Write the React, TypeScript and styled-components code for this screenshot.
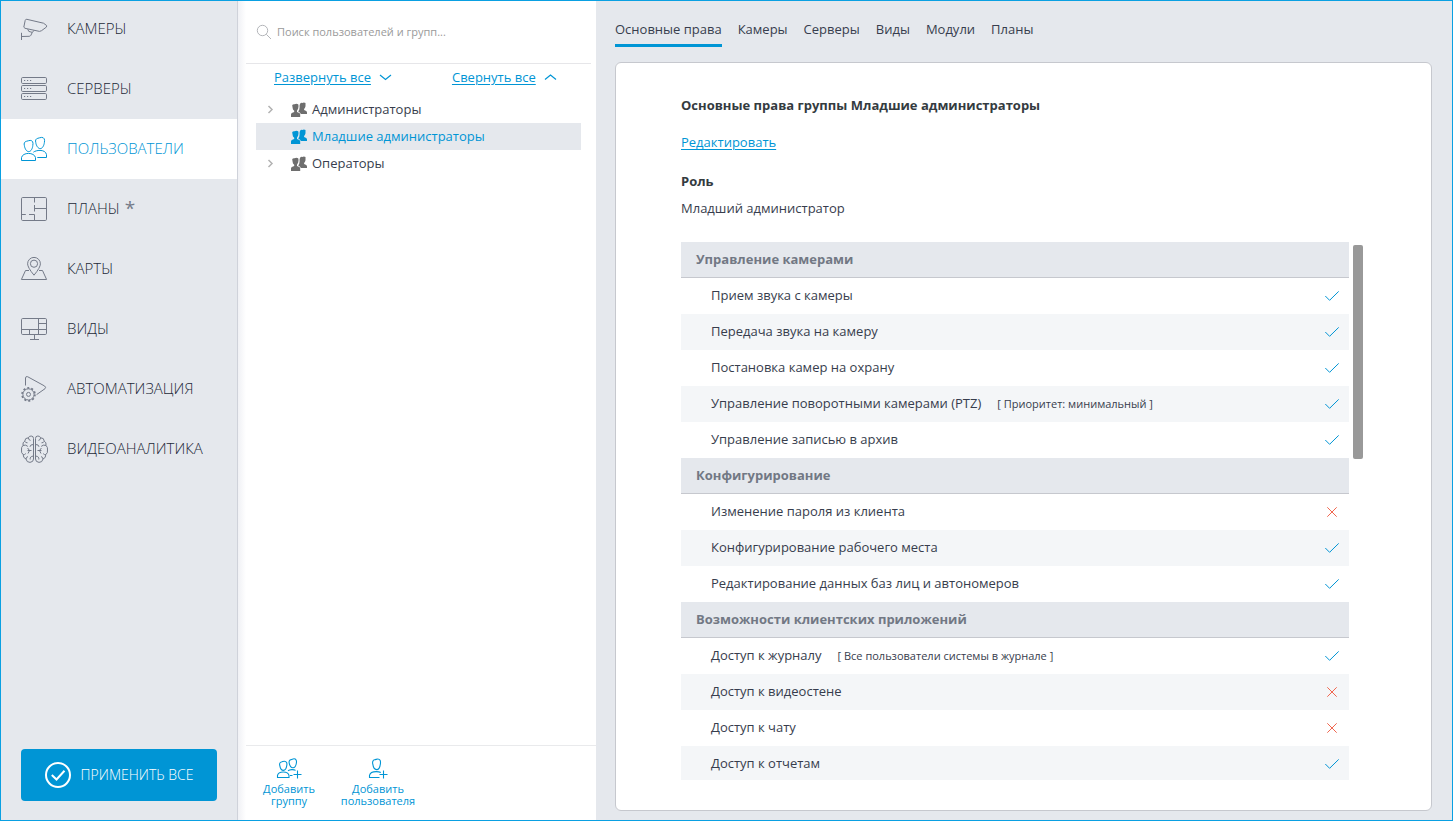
import React from 'react';
import styled, { createGlobalStyle } from 'styled-components';

const c = {
  accent: '#0095d5',
  frame: '#0aa0e2',
  bg: '#e5e8ed',
  line: '#c6c8ce',
  text: '#373d4d',
  heading: '#343b3f',
  muted: '#727884',
  icon: '#747a88',
  danger: '#f0674f',
};

const GlobalStyle = createGlobalStyle`
  *, *::before, *::after { box-sizing: border-box; }
  body {
    margin: 0;
    background: ${c.bg};
    color: ${c.text};
    font-family: "Open Sans", "Noto Sans", sans-serif;
    font-size: 13px;
    line-height: 18px;
  }
  button { font: inherit; border: 0; background: none; padding: 0; cursor: pointer; }
  svg { display: block; flex: none; }
`;

const Shell = styled.div`
  display: flex;
  height: 100vh;
  min-height: 600px;
  border: 1px solid ${c.frame};
  overflow: hidden;
`;

const Sidebar = styled.aside`
  display: flex;
  flex-direction: column;
  justify-content: space-between;
  flex: 0 0 237px;
  border-right: 1px solid #cfd2da;
`;

const Nav = styled.nav`
  display: flex;
  flex-direction: column;
  margin-top: -2px;
`;

const NavItem = styled.a<{ $active?: boolean }>`
  display: flex;
  align-items: center;
  gap: 19px;
  height: 60px;
  padding-left: 19px;
  font-size: 15px;
  font-weight: 300;
  line-height: 20px;
  text-decoration: none;
  color: ${(p) => (p.$active ? c.accent : '#232838')};
  background: ${(p) => (p.$active ? '#fff' : 'transparent')};
  svg { color: ${(p) => (p.$active ? c.accent : c.icon)}; }
`;

const NavLabel = styled.span`
  display: flex;
  gap: 5px;
  padding-bottom: 2px;
`;

const Star = styled.span`
  font-size: 19px;
  font-weight: 400;
  color: ${c.icon};
`;

const ApplyButton = styled.button`
  display: flex;
  align-items: center;
  justify-content: center;
  gap: 10px;
  height: 52px;
  margin: 0 20px 19px;
  border-radius: 4px;
  background: ${c.accent};
  color: #fff;
  font-size: 14px;
  font-weight: 300;
`;

const Panel = styled.section`
  display: flex;
  flex-direction: column;
  flex: 0 0 358px;
  padding-left: 8px;
  background: linear-gradient(to right, #f0f1f5, #fff 8px);
`;

const SearchBar = styled.label`
  display: flex;
  align-items: center;
  gap: 5px;
  height: 63px;
  margin-right: 5px;
  padding-left: 10px;
  border-bottom: 1px solid #e6e6e9;
`;

const SearchInput = styled.input`
  flex: 1;
  min-width: 0;
  border: 0;
  outline: 0;
  padding: 0;
  background: none;
  font: inherit;
  font-size: 11px;
  color: ${c.text};
  &::placeholder { color: #9a9a9a; opacity: 1; }
`;

const TreeActions = styled.div`
  display: flex;
  gap: 60px;
  padding: 4px 0 0 28px;
  height: 32px;
`;

const TreeAction = styled.button`
  display: flex;
  align-items: center;
  gap: 8px;
  height: 18px;
  color: ${c.accent};
  span { text-decoration: underline; text-underline-offset: 2px; }
`;

const Tree = styled.ul`
  list-style: none;
  flex: 1;
  margin: 0;
  padding: 0 15px 0 10px;
`;

const TreeRow = styled.li<{ $active?: boolean }>`
  display: grid;
  grid-template-columns: 23px 16px 1fr;
  align-items: center;
  column-gap: 5px;
  height: 27px;
  padding-left: 7px;
  color: ${(p) => (p.$active ? c.accent : c.text)};
  background: ${(p) => (p.$active ? c.bg : 'transparent')};
`;

const TreeName = styled.span`
  padding-bottom: 2px;
`;

const PanelFooter = styled.div`
  display: flex;
  align-items: flex-start;
  gap: 9px;
  height: 75px;
  padding: 12px 0 0 3px;
  border-top: 1px solid #e9eaec;
`;

const AddButton = styled.button`
  display: flex;
  flex-direction: column;
  align-items: center;
  gap: 3px;
  width: 80px;
  color: ${c.accent};
  font-size: 11px;
  line-height: 12px;
`;

const Main = styled.main`
  display: flex;
  flex-direction: column;
  flex: 1;
  min-width: 0;
  padding: 0 20px 9px 19px;
`;

const Tabs = styled.nav`
  display: flex;
  gap: 16px;
  height: 61px;
  padding-top: 19px;
`;

const Tab = styled.a<{ $active?: boolean }>`
  height: 27px;
  color: ${c.text};
  text-decoration: none;
  border-bottom: 3px solid ${(p) => (p.$active ? c.accent : 'transparent')};
`;

const Card = styled.section`
  display: flex;
  flex-direction: column;
  flex: 1;
  min-height: 0;
  padding: 33px 68px 30px 65px;
  border: 1px solid ${c.line};
  border-radius: 6px;
  background: #fff;
`;

const Title = styled.h1`
  margin: 0 0 19px;
  font-size: 13px;
  font-weight: 700;
  color: ${c.heading};
`;

const EditLink = styled.a`
  align-self: flex-start;
  margin-bottom: 21px;
  color: ${c.accent};
  text-underline-offset: 2px;
`;

const RoleTitle = styled.h2`
  margin: 0 0 9px;
  font-size: 13px;
  font-weight: 700;
  color: ${c.heading};
`;

const Role = styled.p`
  margin: 0 0 25px;
`;

const ScrollArea = styled.div`
  display: flex;
  gap: 4px;
  flex: 1;
  min-height: 0;
`;

const Viewport = styled.div`
  flex: 1;
  overflow-y: auto;
  scrollbar-width: none;
`;

const Rail = styled.div`
  flex: 0 0 10px;
  padding-top: 3px;
`;

const Thumb = styled.div`
  height: 40%;
  border-radius: 2px;
  background: #999;
`;

const Table = styled.table`
  width: 100%;
  border-collapse: separate;
  border-spacing: 0;
`;

const GroupHead = styled.th`
  height: 36px;
  padding: 0 15px 2px;
  text-align: left;
  font-weight: 700;
  color: ${c.muted};
  background: ${c.bg};
  border-bottom: 1px solid ${c.line};
`;

const RightRow = styled.tr`
  &:nth-child(odd) { background: #f4f6f8; }
`;

const RightName = styled.td`
  height: 36px;
  padding: 0 0 2px 30px;
`;

const Note = styled.span`
  margin-left: 16px;
  font-size: 11px;
`;

const Mark = styled.td`
  width: 34px;
  padding: 0 10px;
  svg { margin: 0 auto; }
`;

const Line = ({ children }: { children: React.ReactNode }) => (
  <svg width="28" height="28" viewBox="0 0 28 28" fill="none" stroke="currentColor" strokeWidth="1" strokeLinejoin="round" aria-hidden="true">
    {children}
  </svg>
);

const CameraIcon = () => (
  <Line>
    <path d="M6.8 4.3 23.5 8.2 26.6 10.5 26.5 12 21.5 15.7 19.5 16.4 5 13.3 3.8 12.2 5.2 5.4Q5.6 4.1 6.8 4.3Z" />
    <path d="M7.7 14.2 8.8 16.4 12.3 17.4 14 15.4M12.3 17.4 10.8 20.4Q10.4 21.2 9.2 21.3L1.5 21.5M1.5 17.8V25" />
  </Line>
);

const ServersIcon = () => (
  <Line>
    {[2.5, 10.5, 18.5].map((y) => (
      <g key={y}>
        <rect x="1.5" y={y} width="25" height="6" rx="1.2" />
        <path d={`M4 ${y + 3}h1.2M7 ${y + 3}h1.2M10 ${y + 3}h1.2`} />
      </g>
    ))}
  </Line>
);

const UsersIcon = () => (
  <Line>
    <path d="M4.4 10.6C3.6 8.4 4.6 6.6 6.4 6.3 8 6.1 8.6 5.4 10.2 5.4 12.6 5.4 13.4 7.4 12.8 10.4 12.6 13.4 11 16.6 8.7 16.6 6.4 16.6 4.8 13.6 4.4 10.6Z" />
    <path d="M1.5 25.5V22.6C2 19.8 5.4 18.4 8.5 18.4S15 19.8 15.5 22.6V25.5Z" />
    <path d="M15.8 7.6C15 5.4 16 3.6 17.8 3.3 19.4 3.1 20 2.4 21.6 2.4 24.2 2.4 25 4.4 24.4 7.4 24 10.4 22.6 13.6 20.2 13.6 18 13.6 16.2 10.6 15.8 7.6Z" />
    <path d="M13.4 17.2C15 16 17.4 15.4 20 15.4 23.2 15.4 26 16.8 26.5 19.6V22.5H17.3" />
  </Line>
);

const PlansIcon = () => (
  <Line>
    <rect x="1.5" y="2.5" width="25" height="23" rx="1.2" />
    <path d="M14.5 2.5V7.5M14.5 10V16.5M14.5 13.5H26.5M1.5 19.5H5.8M9 19.5H14.5V25.5" />
  </Line>
);

const MapIcon = () => (
  <Line>
    <path d="M14 20.2Q7.6 12.4 7.6 8.8A6.4 6.4 0 0 1 20.4 8.8Q20.4 12.4 14 20.2Z" />
    <circle cx="14" cy="8.7" r="3.6" />
    <path d="M9 15.5H5.5L1.4 24.5H26.6L22.5 15.5H19" />
  </Line>
);

const ViewsIcon = () => (
  <Line>
    <rect x="1.5" y="3.5" width="25" height="16" rx="1.2" />
    <path d="M18.5 3.5V19.5M1.5 14.5H26.5M9.5 14.5V19.5M18.5 8.5H26.5M14.5 19.5V24.5M10 24.5H19" />
  </Line>
);

const AutomationIcon = () => (
  <Line>
    <path d="M5.5 10.5V3Q5.7 1 7.6 1.7L24.6 11Q26.4 12.4 25 13.7L16.6 19.6" />
    <circle cx="8.5" cy="19.4" r="5.6" />
    <circle cx="8.5" cy="19.4" r="6.5" strokeWidth="1.6" strokeDasharray="2.04 2.04" />
    <circle cx="8.5" cy="19.4" r="2" />
  </Line>
);

const BrainHalf = () => (
  <>
    <path d="M13.5 3.5Q13.5 1 11.2 1 9 1 8.4 2.8 5 2.6 4.7 6.2 2.4 7.4 3 10.4 1 12.4 1.5 15 1 18 3.2 19.6 3 23 6 24 6.6 27.5 10 27.4 13.5 27 13.5 24Z" />
    <path d="M4.7 6.2Q5.5 8 7.5 7.8M8.4 2.8Q8.4 5 10.5 5.4M3 10.4Q6 9.4 7.8 11.4M7.5 15.5H11.5M9.5 15.5 7.6 13M9.5 15.5 8 18.5M3.2 19.6Q4.5 20 5.8 18.6M13.2 9.5Q10.2 9.5 10 11.8M6 24Q6 22 8 21.6M10.2 24.5Q9.6 21.5 13.4 21" />
  </>
);

const BrainIcon = () => (
  <Line>
    <BrainHalf />
    <g transform="translate(29 0) scale(-1 1)"><BrainHalf /></g>
  </Line>
);

const ApplyIcon = () => (
  <svg width="26" height="26" viewBox="0 0 26 26" fill="none" stroke="#fff" strokeWidth="2" aria-hidden="true">
    <circle cx="13" cy="13" r="12" />
    <path d="M6.8 13 11.5 17.5 19.5 8.8" />
  </svg>
);

const SearchIcon = () => (
  <svg width="16" height="16" viewBox="0 0 16 16" fill="none" stroke="#b4b6ba" aria-hidden="true">
    <circle cx="6.5" cy="6.5" r="5.2" />
    <path d="M10.3 10.3 15 15" />
  </svg>
);

const Chevron = ({ up }: { up?: boolean }) => (
  <svg width="13" height="8" viewBox="0 0 13 8" fill="none" stroke="currentColor" strokeWidth="1.2" aria-hidden="true">
    <path d={up ? 'M1 6.5 6.5 2 12 6.5' : 'M1 2 6.5 6.5 12 2'} />
  </svg>
);

const Expander = () => (
  <svg width="15" height="9" viewBox="0 0 15 9" fill="none" stroke="#b3b3b3" strokeWidth="1.5" aria-hidden="true">
    <path d="M5.5 1 9 4.5 5.5 8" />
  </svg>
);

const GroupIcon = ({ active }: { active?: boolean }) => (
  <svg width="16" height="15" viewBox="0 0 16 15" fill={active ? c.accent : '#6e6e6e'} aria-hidden="true">
    <path d="M9 2Q9.6.7 11.2.9 13 0 14.5.9V4.2Q14.2 6 13.1 7V8L15.2 9Q16 9.5 16 10.5V12H9.8Q9.5 10.5 7.6 9.8L7.2 9.3Q8.6 8 8.6 5.5V3.2Z" />
    <path d="M1.2 3.2Q1.8 2 3.5 2.2 5.5 1.3 7.2 2.2 8 4 7.2 6.6L6 8.8V10L8.4 11Q9.2 11.5 9.2 12.6V15H0V12.6Q0 11.5.8 11L3.2 10V8.8Q1.6 7.6 1.6 5.8Z" />
  </svg>
);

const AddGroupIcon = () => (
  <svg width="26" height="22" viewBox="0 0 26 22" fill="none" stroke="currentColor" strokeWidth="1.1" aria-hidden="true">
    <path d="M3.8 7.6C3.2 5.6 4 4.2 5.4 4 6.6 3.8 7.2 3.2 8.4 3.2 10.6 3.2 11.2 5 10.8 7.4 10.4 10 9.2 12.4 7.4 12.4S4.2 10 3.8 7.6Z" />
    <path d="M1.5 19.5V17.4C2 15 4.6 14 7.2 14S12.5 15 13 17.4V19.5Z" />
    <path d="M13.2 5.2C12.8 3.2 13.6 1.8 15 1.6 16.2 1.4 16.8.8 18 .8 20 .8 20.8 2.6 20.4 5 20 7.6 18.8 9.8 17 9.8S13.6 7.6 13.2 5.2ZM12 12.8C13.8 11.6 17.4 11 19.6 12.4M14 17.5H16.5M17.5 16.5H25.5M21.5 12.5V20.5" />
  </svg>
);

const AddUserIcon = () => (
  <svg width="20" height="22" viewBox="0 0 20 22" fill="none" stroke="currentColor" strokeWidth="1.1" aria-hidden="true">
    <path d="M4.8 6.2C4.2 3.8 5 2 6.6 1.8 8 1.6 8.6 1 9.8 1 12 1 12.8 3 12.4 5.8 12 9 10.6 11.6 8.6 11.6S5.2 9 4.8 6.2Z" />
    <path d="M11.5 19.5H1.5V17.4C2 14.8 5 13.6 8.2 13.6 10 13.6 11.6 13.9 12.8 14.6M11.5 16.5H19.5M15.5 12.5V20.5" />
  </svg>
);

const Allowed = () => (
  <svg width="14" height="10" viewBox="0 0 14 10" fill="none" stroke={c.accent} role="img" aria-label="Да">
    <path d="M.3 5 4.6 9.3 13.7.4" />
  </svg>
);

const Denied = () => (
  <svg width="10" height="10" viewBox="0 0 10 10" fill="none" stroke={c.danger} role="img" aria-label="Нет">
    <path d="M.3.3 9.7 9.7M9.7.3.3 9.7" />
  </svg>
);

const navItems = [
  { label: 'КАМЕРЫ', Icon: CameraIcon },
  { label: 'СЕРВЕРЫ', Icon: ServersIcon },
  { label: 'ПОЛЬЗОВАТЕЛИ', Icon: UsersIcon, active: true },
  { label: 'ПЛАНЫ', Icon: PlansIcon, changed: true },
  { label: 'КАРТЫ', Icon: MapIcon },
  { label: 'ВИДЫ', Icon: ViewsIcon },
  { label: 'АВТОМАТИЗАЦИЯ', Icon: AutomationIcon },
  { label: 'ВИДЕОАНАЛИТИКА', Icon: BrainIcon },
];

const userGroups = [
  { name: 'Администраторы', expandable: true },
  { name: 'Младшие администраторы', active: true },
  { name: 'Операторы', expandable: true },
];

const tabs = ['Основные права', 'Камеры', 'Серверы', 'Виды', 'Модули', 'Планы'];

type Right = { name: string; note?: string; ok: boolean };
const rights: { title: string; items: Right[] }[] = [
  {
    title: 'Управление камерами',
    items: [
      { name: 'Прием звука с камеры', ok: true },
      { name: 'Передача звука на камеру', ok: true },
      { name: 'Постановка камер на охрану', ok: true },
      { name: 'Управление поворотными камерами (PTZ)', note: '[ Приоритет: минимальный ]', ok: true },
      { name: 'Управление записью в архив', ok: true },
    ],
  },
  {
    title: 'Конфигурирование',
    items: [
      { name: 'Изменение пароля из клиента', ok: false },
      { name: 'Конфигурирование рабочего места', ok: true },
      { name: 'Редактирование данных баз лиц и автономеров', ok: true },
    ],
  },
  {
    title: 'Возможности клиентских приложений',
    items: [
      { name: 'Доступ к журналу', note: '[ Все пользователи системы в журнале ]', ok: true },
      { name: 'Доступ к видеостене', ok: false },
      { name: 'Доступ к чату', ok: false },
      { name: 'Доступ к отчетам', ok: true },
    ],
  },
];

export default function App() {
  return (
    <>
      <GlobalStyle />
      <Shell>
        <Sidebar>
          <Nav>
            {navItems.map(({ label, Icon, active, changed }) => (
              <NavItem key={label} href="#" $active={active}>
                <Icon />
                <NavLabel>
                  {label}
                  {changed && <Star>*</Star>}
                </NavLabel>
              </NavItem>
            ))}
          </Nav>
          <ApplyButton type="button">
            <ApplyIcon />
            ПРИМЕНИТЬ ВСЕ
          </ApplyButton>
        </Sidebar>

        <Panel>
          <SearchBar>
            <SearchIcon />
            <SearchInput type="text" placeholder="Поиск пользователей и групп..." />
          </SearchBar>
          <TreeActions>
            <TreeAction type="button"><span>Развернуть все</span><Chevron /></TreeAction>
            <TreeAction type="button"><span>Свернуть все</span><Chevron up /></TreeAction>
          </TreeActions>
          <Tree>
            {userGroups.map((g) => (
              <TreeRow key={g.name} $active={g.active}>
                {g.expandable ? <Expander /> : <span />}
                <GroupIcon active={g.active} />
                <TreeName>{g.name}</TreeName>
              </TreeRow>
            ))}
          </Tree>
          <PanelFooter>
            <AddButton type="button">
              <AddGroupIcon />
              Добавить группу
            </AddButton>
            <AddButton type="button">
              <AddUserIcon />
              Добавить пользователя
            </AddButton>
          </PanelFooter>
        </Panel>

        <Main>
          <Tabs>
            {tabs.map((t, i) => (
              <Tab key={t} href="#" $active={i === 0}>{t}</Tab>
            ))}
          </Tabs>
          <Card>
            <Title>Основные права группы Младшие администраторы</Title>
            <EditLink href="#">Редактировать</EditLink>
            <RoleTitle>Роль</RoleTitle>
            <Role>Младший администратор</Role>
            <ScrollArea>
              <Viewport>
                <Table>
                  {rights.map((group) => (
                    <tbody key={group.title}>
                      <tr><GroupHead colSpan={2} scope="rowgroup">{group.title}</GroupHead></tr>
                      {group.items.map((r) => (
                        <RightRow key={r.name}>
                          <RightName>{r.name}{r.note && <Note>{r.note}</Note>}</RightName>
                          <Mark>{r.ok ? <Allowed /> : <Denied />}</Mark>
                        </RightRow>
                      ))}
                    </tbody>
                  ))}
                </Table>
              </Viewport>
              <Rail><Thumb /></Rail>
            </ScrollArea>
          </Card>
        </Main>
      </Shell>
    </>
  );
}
